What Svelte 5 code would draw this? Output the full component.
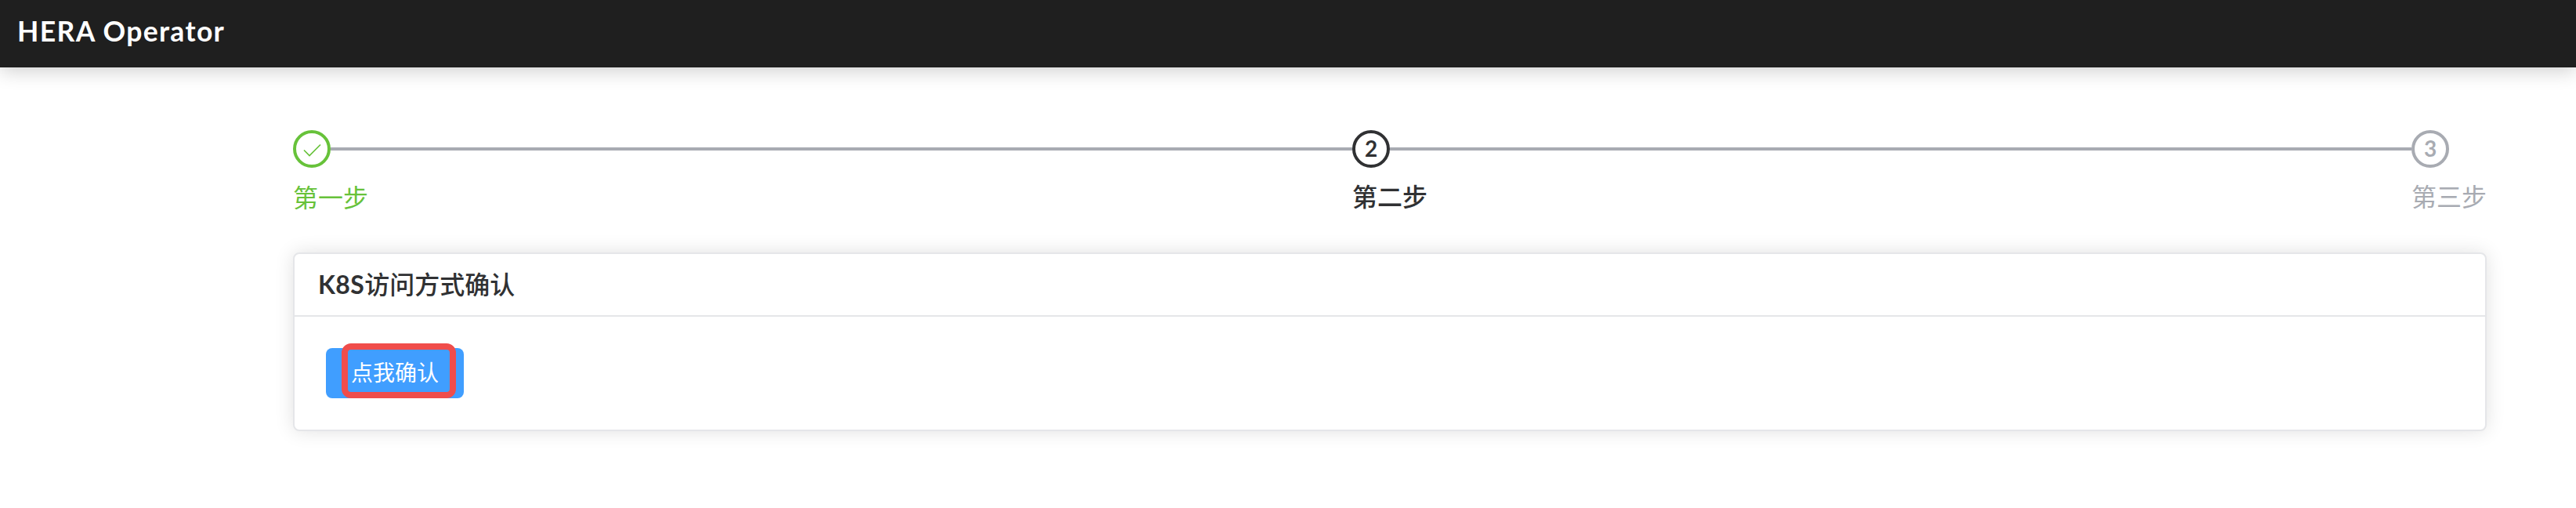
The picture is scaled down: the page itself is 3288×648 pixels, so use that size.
<script>
  const steps = [
    { n: '1', title: '第一步', state: 'done' },
    { n: '2', title: '第二步', state: 'active' },
    { n: '3', title: '第三步', state: 'wait' }
  ];
</script>

<header><h1>HERA Operator</h1></header>
<main>
  <div class="steps">
    {#each steps as step}
      <div class="step {step.state}">
        <div class="track">
          <span class="circle">
            {#if step.state === 'done'}
              <svg width="28" height="28" viewBox="0 0 28 28" fill="none" stroke="currentColor" stroke-width="1.7">
                <path d="M4 15.5 L11 22.5 L25 8.5" />
              </svg>
            {:else}<span class="num">{step.n}</span>{/if}
          </span>
          {#if step.state !== 'wait'}<span class="line"></span>{/if}
        </div>
        <div class="title">{step.title}</div>
      </div>
    {/each}
  </div>
  <section class="card">
    <div class="card-head"><h2><span class="latin">K8S</span>访问方式确认</h2></div>
    <div class="card-body">
      <button><span class="label">点我确认</span><span class="mark"></span></button>
    </div>
  </section>
</main>

<style>
  :global(body) { background: #fff; }
  header {
    box-sizing: border-box;
    height: 86px;
    padding-left: 22px;
    background: #1f1f1f;
    box-shadow: 0 4px 24px rgba(0, 0, 0, 0.2);
  }
  h1 {
    margin: 0;
    font: 700 35.5px/79px Lato, sans-serif;
    letter-spacing: 1.35px;
    color: #fff;
    white-space: nowrap;
  }
  main {
    box-sizing: border-box;
    width: 2800px;
    height: 562px;
    margin-left: 374px;
    padding-top: 80px;
    font-family: Lato, "Noto Sans CJK SC", sans-serif;
  }
  .steps { display: flex; height: 156px; }
  .step { flex: 1; }
  .step.wait { flex: 0 0 96px; color: #a8abb2; }
  .done { color: #67c23a; }
  .active { color: #303133; }
  .track { display: flex; align-items: center; height: 48px; }
  .circle {
    box-sizing: border-box;
    flex: none;
    width: 48px;
    height: 48px;
    border: 4px solid currentColor;
    border-radius: 50%;
    display: flex;
    align-items: center;
    justify-content: center;
  }
  .num { font: 700 28px/40px Lato, sans-serif; height: 42px; }
  .line { flex: 1; height: 4px; background: #a8abb2; }
  .title { font-size: 32px; line-height: 73px; font-weight: 400; white-space: nowrap; }
  .done .title { line-height: 76px; }
  .active .title { font-weight: 500; }
  .card {
    box-sizing: border-box;
    height: 228px;
    border: 2px solid #e5e6e9;
    border-radius: 8px;
    background: #fff;
    box-shadow: 0 0 24px rgba(0, 0, 0, 0.12);
  }
  .card-head {
    box-sizing: border-box;
    height: 80px;
    border-bottom: 2px solid #e5e6e9;
    padding-left: 30px;
  }
  h2 { margin: 0; font-size: 32px; font-weight: 500; line-height: 77px; color: #303133; white-space: nowrap; }
  .latin { font-weight: 700; letter-spacing: 0.4px; }
  .card-body { padding: 40px; }
  button {
    position: relative;
    display: block;
    width: 176px;
    height: 64px;
    padding: 0 0 0 32px;
    border: 0;
    border-radius: 8px;
    background: #409eff;
    color: #fff;
    font: 400 28px/60px "Noto Sans CJK SC", sans-serif;
    text-align: left;
  }
  .label { display: block; height: 64px; white-space: nowrap; }
  .mark {
    position: absolute;
    left: 20px;
    top: -6px;
    box-sizing: border-box;
    width: 146px;
    height: 70px;
    border: 8px solid #f04d4b;
    border-radius: 12px;
  }
</style>
